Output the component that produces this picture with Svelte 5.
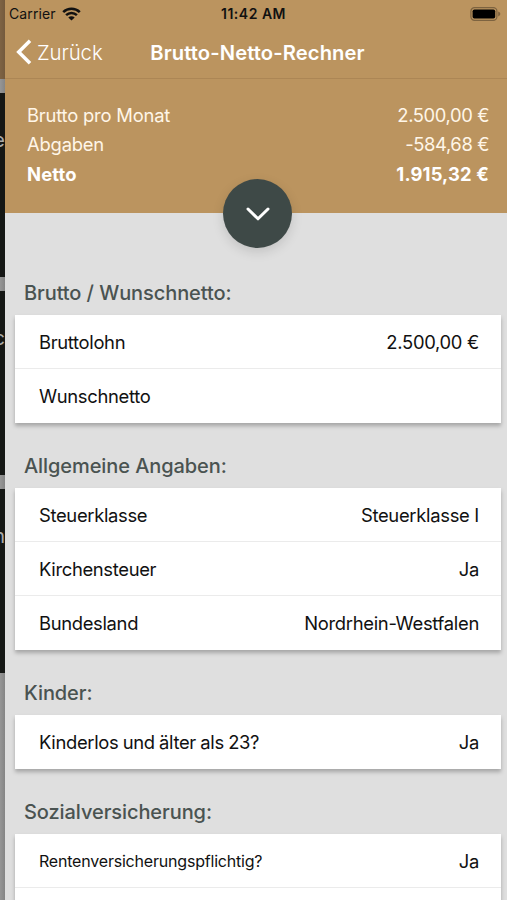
<script>
	const summary = [
		{ label: 'Brutto pro Monat', value: '2.500,00 €' },
		{ label: 'Abgaben', value: '-584,68 €' },
		{ label: 'Netto', value: '1.915,32 €', total: true }
	];

	const sections = [
		{
			title: 'Brutto / Wunschnetto:',
			rows: [
				{ label: 'Bruttolohn', value: '2.500,00 €' },
				{ label: 'Wunschnetto', value: '' }
			]
		},
		{
			title: 'Allgemeine Angaben:',
			rows: [
				{ label: 'Steuerklasse', value: 'Steuerklasse I' },
				{ label: 'Kirchensteuer', value: 'Ja' },
				{ label: 'Bundesland', value: 'Nordrhein-Westfalen' }
			]
		},
		{
			title: 'Kinder:',
			rows: [{ label: 'Kinderlos und älter als 23?', value: 'Ja' }]
		},
		{
			title: 'Sozialversicherung:',
			rows: [
				{ label: 'Rentenversicherungspflichtig?', value: 'Ja', small: true },
				{ label: '', value: '' }
			]
		}
	];

	// last letters of the menu tiles on the page underneath
	const tiles = ['e', 'c', 'n'];
</script>

<div class="app">
	<div class="previous">
		<div class="previous-bar"></div>
		{#each tiles as tile}
			<div class="tile">{tile}</div>
		{/each}
	</div>

	<div class="screen">
		<div class="status">
			<div class="carrier">
				<span>Carrier</span>
				<svg width="19" height="14" viewBox="0 0 19 14">
					<path d="M1.2 5.1a11.8 11.8 0 0 1 16.6 0" />
					<path d="M4.1 8.1a7.7 7.7 0 0 1 10.8 0" />
					<path class="dot" d="M9.5 13.6 6.3 10.5a4.5 4.5 0 0 1 6.4 0z" />
				</svg>
			</div>
			<span class="time">11:42 AM</span>
			<svg class="battery" width="31" height="14" viewBox="0 0 31 14">
				<rect class="case" x="0.9" y="0.7" width="26" height="12.6" rx="3.6" />
				<rect x="2.6" y="2.4" width="22.6" height="9.2" rx="1.8" />
				<path class="cap" d="M28.2 4.6q2.2 1 2.2 2.4t-2.2 2.4z" />
			</svg>
		</div>

		<nav>
			<button class="back">
				<svg width="16" height="26" viewBox="0 0 16 26">
					<path d="M14 1.7 2.7 13 14 24.3" />
				</svg>
				<span>Zurück</span>
			</button>
			<h1>Brutto-Netto-Rechner</h1>
		</nav>

		<header>
			{#each summary as item}
				<div class="sum" class:total={item.total}>
					<span>{item.label}</span>
					<span class="amount">{item.value}</span>
				</div>
			{/each}
			<button class="toggle" aria-label="Details">
				<svg width="24" height="14" viewBox="0 0 24 14">
					<path d="M2 2l10 9.8L22 2" />
				</svg>
			</button>
		</header>

		<main>
			{#each sections as section}
				<section>
					<h2>{section.title}</h2>
					<div class="card">
						{#each section.rows as row}
							<div class="row">
								<span class="label" class:small={row.small}>{row.label}</span>
								<span class="value">{row.value}</span>
							</div>
						{/each}
					</div>
				</section>
			{/each}
		</main>
	</div>
</div>

<style>
	.app {
		display: flex;
		height: 900px;
		overflow: hidden;
		background: #dfdfdf;
		font-family: Inter, 'Liberation Sans', sans-serif;
		font-size: 18.4px;
		color: #111;
	}

	button {
		padding: 0;
		border: 0;
		background: none;
		font: inherit;
		color: inherit;
	}

	path {
		fill: none;
		stroke: currentColor;
	}

	.previous {
		flex: none;
		width: 5px;
		overflow: hidden;
		background: linear-gradient(to right, #969696, #858585);
	}

	.previous-bar {
		height: 79px;
		background: linear-gradient(to right, #7e6344, #745a3d);
	}

	.tile {
		display: flex;
		justify-content: flex-end;
		height: 184px;
		margin-top: 14px;
		box-sizing: border-box;
		padding-top: 33px;
		background: #151715;
		color: #aaa;
		font-size: 20px;
		line-height: 28px;
	}

	.screen {
		flex: 1;
		display: flex;
		flex-direction: column;
		min-width: 0;
	}

	.status {
		flex: none;
		display: grid;
		grid-template-columns: 1fr auto 1fr;
		align-items: center;
		height: 27px;
		padding: 0 9px 0 4px;
		background: #bb945f;
		color: #111;
		font-size: 14px;
	}

	.carrier {
		display: flex;
		align-items: center;
		gap: 6px;
		letter-spacing: 0.1px;
	}

	.carrier path {
		stroke-width: 2.5;
	}

	.carrier .dot {
		fill: currentColor;
		stroke: none;
	}

	.time {
		font-weight: 600;
		letter-spacing: 0.5px;
	}

	.battery {
		justify-self: end;
		margin-right: -3px;
	}

	.battery .case {
		fill: none;
		stroke: #7d6340;
		stroke-width: 1.2;
	}

	.battery .cap {
		fill: #7d6340;
		stroke: none;
	}

	nav {
		flex: none;
		display: grid;
		grid-template-columns: 1fr auto 1fr;
		align-items: center;
		height: 52px;
		box-sizing: border-box;
		padding: 0 8px 1px 11px;
		border-bottom: 1px solid #ac8655;
		background: #bb945f;
		color: #fff;
	}

	.back {
		display: flex;
		align-items: center;
		gap: 5px;
		font-size: 20.4px;
		font-weight: 300;
		letter-spacing: -0.1px;
	}

	.back path {
		stroke-width: 3.5;
	}

	h1 {
		margin: 0;
		font-size: 20.2px;
		font-weight: 600;
		letter-spacing: 0.1px;
	}

	header {
		position: relative;
		flex: none;
		height: 134px;
		box-sizing: border-box;
		padding: 22px 18px 0 22px;
		background: #bb945f;
		color: #fff6e8;
	}

	.sum {
		display: flex;
		justify-content: space-between;
		line-height: 29.4px;
		letter-spacing: -0.2px;
	}

	.amount {
		letter-spacing: -0.4px;
	}

	.sum.total {
		color: #fff;
		font-weight: 700;
		letter-spacing: 0.15px;
	}

	.toggle {
		position: absolute;
		bottom: -35px;
		left: 218px;
		display: flex;
		align-items: center;
		justify-content: center;
		width: 69px;
		height: 69px;
		border-radius: 50%;
		background: #3e4947;
		box-shadow: 0 4px 12px rgba(0, 0, 0, 0.13);
		color: #fff;
	}

	.total .amount {
		letter-spacing: 0.15px;
	}

	.toggle path {
		stroke-width: 3;
		stroke-linecap: round;
		stroke-linejoin: round;
	}

	main {
		padding: 56px 6px 0 10px;
	}

	section {
		margin-bottom: 19px;
	}

	h2 {
		margin: 0;
		padding-left: 9px;
		height: 46px;
		box-sizing: border-box;
		padding-top: 11px;
		color: #4a5351;
		font-size: 20px;
		font-weight: 500;
		letter-spacing: -0.08px;
		line-height: 26px;
	}

	.card {
		background: #fff;
		box-shadow: 0 3px 4px rgba(0, 0, 0, 0.26);
	}

	.row {
		display: flex;
		align-items: center;
		justify-content: space-between;
		height: 54px;
		box-sizing: border-box;
		padding: 0 22px 0 24px;
		border-bottom: 1px solid #ebebeb;
	}

	.row:last-child {
		border-bottom-color: transparent;
	}

	.label {
		letter-spacing: -0.33px;
		word-spacing: -0.5px;
	}

	.value {
		letter-spacing: -0.3px;
	}

	.label.small {
		font-size: 16px;
		letter-spacing: -0.2px;
	}
</style>
